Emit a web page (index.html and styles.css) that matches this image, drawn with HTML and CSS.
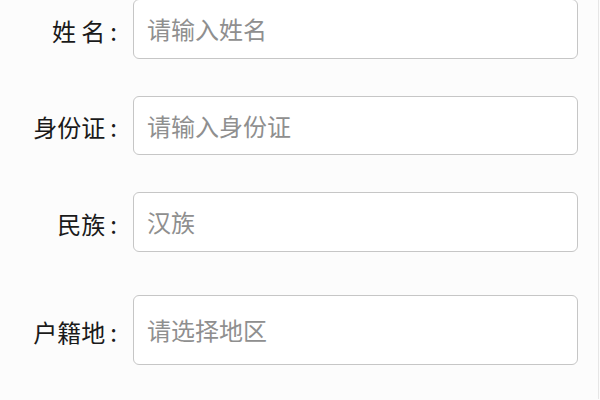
FILE: index.html
```html
<!DOCTYPE html>
<html lang="zh-CN">
<head>
<meta charset="utf-8">
<title>表单</title>
<link rel="stylesheet" href="styles.css">
</head>
<body>
<div class="page">
  <form class="form">
    <div class="row row-1">
      <label class="label">姓 名<span class="colon">:</span></label>
      <div class="field"><span class="placeholder">请输入姓名</span></div>
    </div>
    <div class="row row-2">
      <label class="label">身份证<span class="colon">:</span></label>
      <div class="field"><span class="placeholder">请输入身份证</span></div>
    </div>
    <div class="row row-3">
      <label class="label">民族<span class="colon">:</span></label>
      <div class="field"><span class="placeholder">汉族</span></div>
    </div>
    <div class="row row-4">
      <label class="label">户籍地<span class="colon">:</span></label>
      <div class="field"><span class="placeholder">请选择地区</span></div>
    </div>
  </form>
</div>
</body>
</html>
```
FILE: styles.css
```css
html, body {
  margin: 0;
  padding: 0;
  background: #fcfcfc;
}
body {
  font-family: "Noto Sans CJK SC", "Noto Sans", sans-serif;
  width: 600px;
  height: 400px;
  overflow: hidden;
}
.page {
  width: 599px;
  height: 400px;
  border-right: 1px solid #e6e6e6;
  box-sizing: border-box;
}
.form {
  display: flex;
  flex-direction: column;
  margin-top: -1px;
}
.row {
  display: grid;
  grid-template-columns: 117px 445px;
  column-gap: 16px;
  align-items: center;
}
.row-1 .field { height: 60px; }
.row-2 { margin-top: 37px; }
.row-2 .field { height: 59px; }
.row-3 { margin-top: 37px; }
.row-3 .field { height: 60px; }
.row-4 { margin-top: 43px; }
.row-4 .field { height: 70px; }
.label {
  text-align: right;
  font-size: 24px;
  color: #1a1a1a;
  line-height: 1;
  white-space: nowrap;
  padding-top: 3px;
}
.colon {
  margin-left: 5px;
}
.field {
  box-sizing: border-box;
  border: 1.5px solid #c6c6c6;
  border-radius: 6px;
  background: #ffffff;
  display: flex;
  align-items: center;
  padding-left: 13px;
}
.placeholder {
  font-size: 24px;
  color: #8f8f8f;
  line-height: 1;
}
```
